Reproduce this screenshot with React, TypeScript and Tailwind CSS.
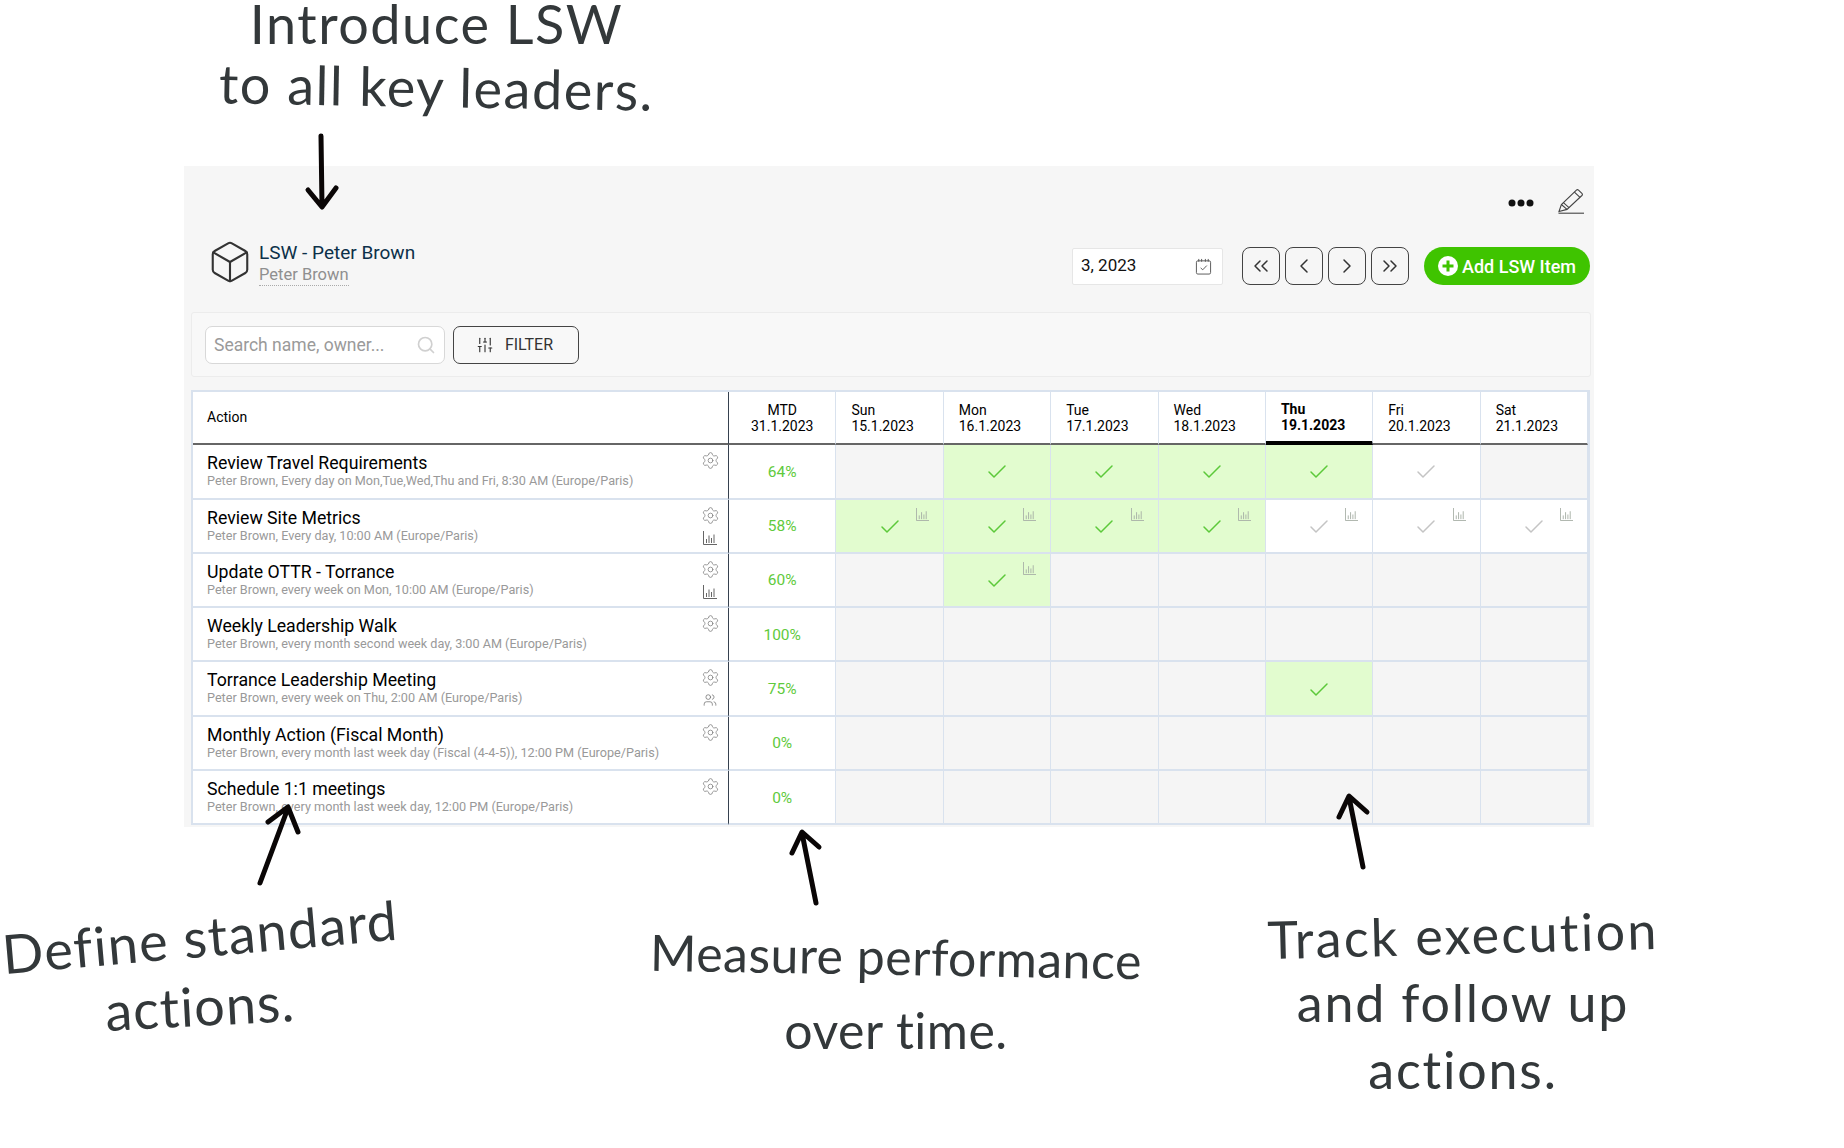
import { Box, Check, ChevronLeft, ChevronRight, ChevronsLeft, ChevronsRight, Search, Settings, SlidersVertical, Users } from "lucide-react"

type DayState = "" | "done" | "doneChart" | "open" | "openChart"

interface ActionRow {
  title: string
  sub: string
  pct: string
  extra?: "chart" | "users"
  days: DayState[]
}

const columns = [
  { day: "Sun", date: "15.1.2023" },
  { day: "Mon", date: "16.1.2023" },
  { day: "Tue", date: "17.1.2023" },
  { day: "Wed", date: "18.1.2023" },
  { day: "Thu", date: "19.1.2023", today: true },
  { day: "Fri", date: "20.1.2023" },
  { day: "Sat", date: "21.1.2023" },
]

const rows: ActionRow[] = [
  {
    title: "Review Travel Requirements",
    sub: "Peter Brown, Every day on Mon,Tue,Wed,Thu and Fri, 8:30 AM (Europe/Paris)",
    pct: "64%",
    days: ["", "done", "done", "done", "done", "open", ""],
  },
  {
    title: "Review Site Metrics",
    sub: "Peter Brown, Every day, 10:00 AM (Europe/Paris)",
    pct: "58%",
    extra: "chart",
    days: ["doneChart", "doneChart", "doneChart", "doneChart", "openChart", "openChart", "openChart"],
  },
  {
    title: "Update OTTR - Torrance",
    sub: "Peter Brown, every week on Mon, 10:00 AM (Europe/Paris)",
    pct: "60%",
    extra: "chart",
    days: ["", "doneChart", "", "", "", "", ""],
  },
  {
    title: "Weekly Leadership Walk",
    sub: "Peter Brown, every month second week day, 3:00 AM (Europe/Paris)",
    pct: "100%",
    days: ["", "", "", "", "", "", ""],
  },
  {
    title: "Torrance Leadership Meeting",
    sub: "Peter Brown, every week on Thu, 2:00 AM (Europe/Paris)",
    pct: "75%",
    extra: "users",
    days: ["", "", "", "", "done", "", ""],
  },
  {
    title: "Monthly Action (Fiscal Month)",
    sub: "Peter Brown, every month last week day (Fiscal (4-4-5)), 12:00 PM (Europe/Paris)",
    pct: "0%",
    days: ["", "", "", "", "", "", ""],
  },
  {
    title: "Schedule 1:1 meetings",
    sub: "Peter Brown, every month last week day, 12:00 PM (Europe/Paris)",
    pct: "0%",
    days: ["", "", "", "", "", "", ""],
  },
]

function ChartIcon({ className }: { className?: string }) {
  return (
    <svg viewBox="0 0 14 14" fill="none" stroke="currentColor" strokeWidth="1" className={className}>
      <path d="M0.5 0v13.5H14" />
      <path d="M3.5 12V8M6 12V4.5M8.5 12V7M11 12V3.5" />
    </svg>
  )
}

function PencilIcon() {
  return (
    <svg viewBox="0 0 26 25" fill="none" stroke="#444" strokeWidth="1.1" className="w-[26px] h-[25px]">
      <path d="M1 22.5l2.4-7L18.4 1.2a1.5 1.5 0 0 1 2.1 0l3.4 3.2a1.5 1.5 0 0 1 0 2.1L9 20.4z" />
      <path d="M3.4 15.5l5.6 4.9M5.4 13.6l5.6 5M16.4 3.1l5.6 5.2" />
      <path d="M0.5 24.2H26" />
    </svg>
  )
}

function CalendarIcon() {
  return (
    <svg viewBox="0 0 18 18" fill="none" stroke="#555" strokeWidth="1" className="w-[17px] h-[17px]">
      <rect x="1.5" y="3" width="15" height="14" rx="1.5" />
      <path d="M4 1v3M7 1v3M11 1v3M14 1v3" />
      <path d="M6 10.5l2.2 2L12.5 8" />
    </svg>
  )
}

function PlusCircle() {
  return (
    <svg viewBox="0 0 20 20" className="w-[20px] h-[20px]">
      <circle cx="10" cy="10" r="10" fill="#fff" />
      <path d="M10 4.5v11M4.5 10h11" stroke="#3fc400" strokeWidth="3" />
    </svg>
  )
}

function DayCell({ state }: { state: DayState }) {
  const done = state === "done" || state === "doneChart"
  const open = state === "open" || state === "openChart"
  const bg = done ? "bg-[#e2fccf]" : open ? "bg-white" : "bg-[#f5f5f5]"
  return (
    <div className={`relative flex items-center justify-center pt-[2px] border-r border-b-2 border-[#d9e2ee] ${bg}`}>
      {state !== "" && (
        <Check className={`w-[24px] h-[24px] ${done ? "text-[#5cc93a]" : "text-[#c4c4c4]"}`} strokeWidth={1.5} />
      )}
      {(state === "doneChart" || state === "openChart") && (
        <ChartIcon className="absolute top-[8px] right-[14px] w-[13px] h-[13px] text-[#a8b0a6]" />
      )}
    </div>
  )
}

function Arrow({ d }: { d: string }) {
  return <path d={d} fill="none" stroke="#0a0606" strokeWidth="5" strokeLinecap="round" strokeLinejoin="round" />
}

export default function App() {
  return (
    <div className="relative w-[1844px] h-[1148px] overflow-hidden bg-white font-[family-name:Roboto] text-black">
      {/* top note */}
      <div className="h-[166px] pl-[218px] pt-[1px] font-[family-name:Lato] font-normal text-[#33383a] text-[54px] leading-[46px] tracking-[1.5px]">
        <p className="w-[437px] text-center">Introduce LSW</p>
        <p className="w-[437px] text-center mt-[17px] rotate-[1deg]">to all key leaders.</p>
      </div>

      {/* board */}
      <div className="ml-[184px] w-[1410px] h-[661px] bg-[#f6f6f6] pl-[7px]">
        <div className="h-[74px] flex justify-end items-start pt-[23px] pr-[10px] gap-[24px]">
          <svg viewBox="0 0 26 8" className="w-[26px] h-[8px] mt-[10px]" fill="#111">
            <circle cx="4" cy="4" r="3.5" />
            <circle cx="13" cy="4" r="3.5" />
            <circle cx="22" cy="4" r="3.5" />
          </svg>
          <PencilIcon />
        </div>

        <div className="h-[72px] flex items-start">
          <Box className="ml-[16px] -mt-[1px] w-[46px] h-[46px] text-[#333]" strokeWidth={1.1} />
          <div className="ml-[6px] mt-[1px]">
            <div className="text-[19px] leading-[24px] text-[#0c3049]">LSW - Peter Brown</div>
            <div className="w-fit text-[16.5px] leading-[20px] text-[#8f8f8f] border-b border-dotted border-[#aaa]">Peter Brown</div>
          </div>
          <div className="ml-auto mr-[4px] mt-[7px] flex items-center">
            <div className="w-[151px] h-[37px] flex items-center justify-between bg-white border border-[#e6e6e6] rounded-[2px] pl-[8px] pr-[10px] text-[17px] text-[#111]">
              <span>3, 2023</span>
              <CalendarIcon />
            </div>
            <div className="ml-[19px] flex gap-[5px]">
              {[ChevronsLeft, ChevronLeft, ChevronRight, ChevronsRight].map((Icon, i) => (
                <button
                  key={i}
                  className="w-[38px] h-[38px] flex items-center justify-center border border-[#444] rounded-[8px] text-[#333]"
                >
                  <Icon className="w-[24px] h-[24px]" strokeWidth={1.5} />
                </button>
              ))}
            </div>
            <button className="ml-[15px] w-[166px] h-[38px] flex items-center justify-center gap-[4px] rounded-full bg-[#3fc400] text-white text-[18px] font-medium">
              <PlusCircle />
              Add LSW Item
            </button>
          </div>
        </div>

        <div className="w-[1400px] h-[65px] flex items-center gap-[8px] pl-[13px] bg-[#f8f8f8] border border-[#ececec] rounded-[3px]">
          <div className="w-[240px] h-[38px] flex items-center bg-white border border-[#d8d8d8] rounded-[7px] pl-[8px] pr-[8px]">
            <input
              placeholder="Search name, owner..."
              className="min-w-0 flex-1 bg-transparent pt-[1px] text-[17.5px] outline-none placeholder:text-[#9a9a9a]"
            />
            <Search className="w-[20px] h-[20px] text-[#d0d0d0]" strokeWidth={2} />
          </div>
          <button className="w-[126px] h-[38px] flex items-center justify-center gap-[11px] pr-[3px] bg-[#f8f8f8] border border-[#444] rounded-[7px] text-[16px] text-[#333]">
            <SlidersVertical className="w-[18px] h-[18px]" strokeWidth={1.5} />
            FILTER
          </button>
        </div>

        <div className="mt-[13px] w-[1399px] grid grid-cols-[536px_repeat(8,1fr)] grid-rows-[53px_54.6px_repeat(6,54.3px)] bg-white border-t-2 border-l-2 border-r-2 border-[#d9e2ee]">
          <div className="flex items-center pl-[14px] text-[14px] border-r border-r-[#36414f] border-b-2 border-b-[#666]">Action</div>
          <div className="flex flex-col items-center justify-center text-[14px] leading-[16px] border-r border-r-[#d9e2ee] border-b-2 border-b-[#666]">
            <span>MTD</span>
            <span>31.1.2023</span>
          </div>
          {columns.map((col) => (
            <div
              key={col.day}
              className={`flex flex-col justify-center pl-[15px] text-[14px] leading-[16px] border-r border-r-[#d9e2ee] ${
                col.today ? "font-bold border-b-[4px] border-b-black" : "border-b-2 border-b-[#666]"
              }`}
            >
              <span>{col.day}</span>
              <span>{col.date}</span>
            </div>
          ))}

          {rows.map((row) => (
            <div key={row.title} className="contents">
              <div className="flex border-r border-r-[#36414f] border-b-2 border-b-[#d9e2ee] pl-[14px] pr-[9px]">
                <div className="flex-1 pt-[8px]">
                  <div className="text-[17.7px] leading-[20px] text-black">{row.title}</div>
                  <div className="text-[12.65px] leading-[16px] text-[#999]">{row.sub}</div>
                </div>
                <div className="w-[18px] pt-[6px] flex flex-col items-center gap-[6px] text-[#808080]">
                  <Settings className="w-[19px] h-[19px] shrink-0" strokeWidth={1} />
                  {row.extra === "chart" && <ChartIcon className="w-[14px] h-[14px] text-[#666]" />}
                  {row.extra === "users" && <Users className="w-[14px] h-[14px] text-[#666]" strokeWidth={1.2} />}
                </div>
              </div>
              <div className="flex items-center justify-center pt-[2px] text-[15.5px] text-[#5fca3c] border-r border-b-2 border-[#d9e2ee]">
                {row.pct}
              </div>
              {row.days.map((state, i) => (
                <DayCell key={i} state={state} />
              ))}
            </div>
          ))}
        </div>
      </div>

      {/* bottom notes */}
      <div className="flex font-[family-name:Lato] font-normal text-[#33383a] text-center text-[54px] leading-[50px] whitespace-nowrap">
        <div className="w-[400px] mt-[85px] tracking-[1.2px]">
          <p className="rotate-[-5deg]">Define standard</p>
          <p className="rotate-[-3deg] mt-[19px] tracking-[1px]">actions.</p>
        </div>
        <div className="w-[500px] mt-[104px] ml-[246px] text-[50px] tracking-[0.5px]">
          <p className="rotate-[1deg]">Measure performance</p>
          <p className="mt-[24px]">over time.</p>
        </div>
        <div className="w-[400px] mt-[82px] ml-[117px] text-[52px] tracking-[1.8px]">
          <p className="rotate-[-1.5deg] tracking-[2.3px]">Track execution</p>
          <p className="mt-[18px]">and follow up</p>
          <p className="mt-[17px]">actions.</p>
        </div>
      </div>

      {/* arrows lie over the board */}
      <svg className="absolute inset-0 w-full h-full pointer-events-none" viewBox="0 0 1844 1148">
        <Arrow d="M321 136L322 206M308 190L322 207L336 188" />
        <Arrow d="M260 883L288 808M268 822L288 807L298 832" />
        <Arrow d="M816 903L802 833M792 853L802 832L819 847" />
        <Arrow d="M1363 867L1349 797M1339 817L1349 796L1367 812" />
      </svg>
    </div>
  )
}
